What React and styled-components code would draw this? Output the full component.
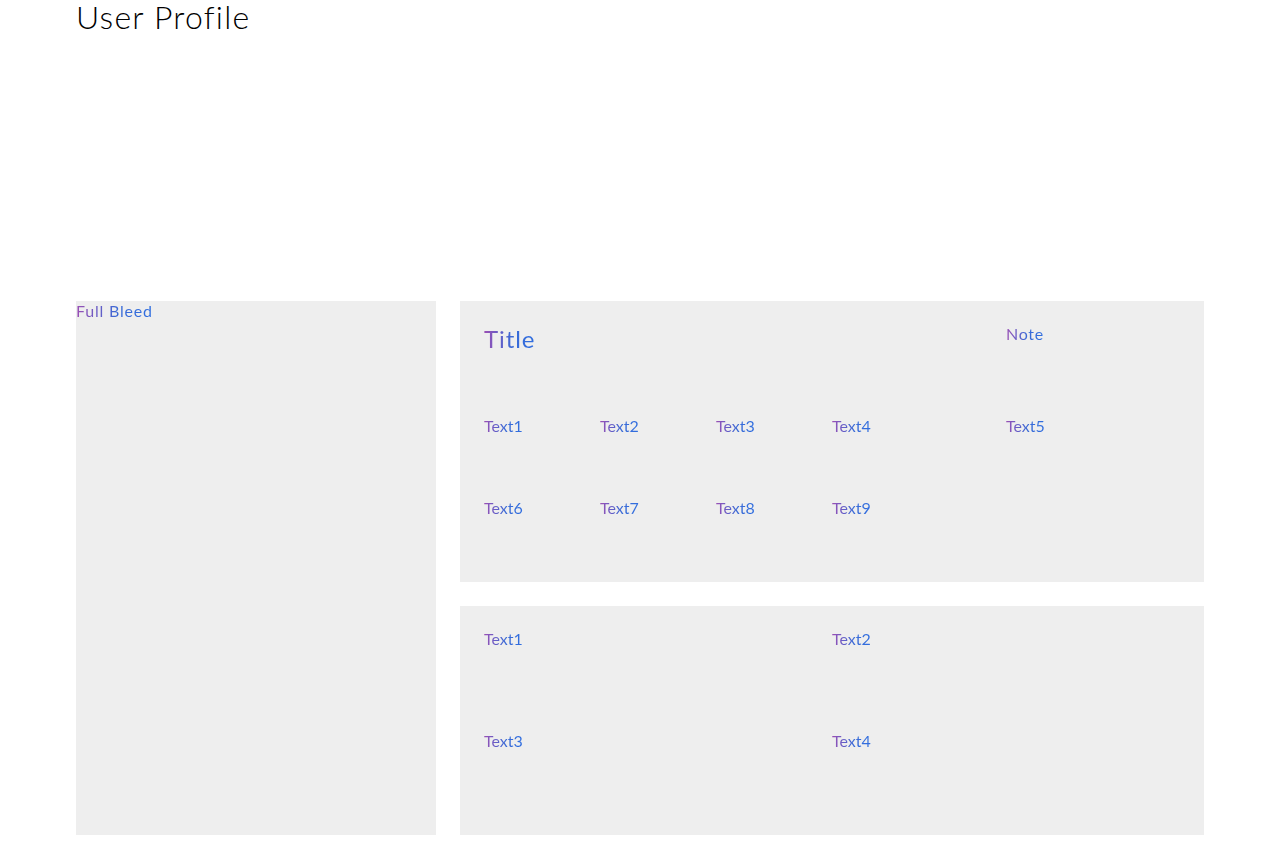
import React from "react";
import styled, { createGlobalStyle } from "styled-components";

const GlobalStyle = createGlobalStyle`
  html, body {
    margin: 0;
    padding: 0;
    background: #ffffff;
    font-family: "Lato", "Noto Sans", sans-serif;
  }
`;

const Page = styled.div`
  width: 1128px;
  margin: 0 auto;
`;

const Heading = styled.h1`
  margin: 0;
  height: 301px;
  font-size: 32px;
  font-weight: 300;
  line-height: 34px;
  letter-spacing: 1.2px;
  color: #000;
`;

const Layout = styled.div`
  display: grid;
  grid-template-columns: 360px 744px;
  column-gap: 24px;
`;

const Panel = styled.div`
  background: #eeeeee;
  box-sizing: border-box;
  height: ${props => props.h}px;
  padding: ${props => props.pad || "0"};
`;

const Column = styled.div`
  display: flex;
  flex-direction: column;
  gap: 24px;
`;

const Grad = styled.span`
  display: inline-block;
  font-size: ${props => props.size || 16}px;
  line-height: ${props => props.lh || 20}px;
  letter-spacing: ${props => props.ls || 0}px;
  font-weight: 400;
  background: linear-gradient(90deg, #9b4fb4 0%, #3a6ad6 55%, #2f6ee0 100%);
  -webkit-background-clip: text;
  background-clip: text;
  color: transparent;
`;

const TopGrid = styled.div`
  display: grid;
  grid-template-columns: 116px 116px 116px 174px 1fr;
  grid-template-rows: 91px 82px auto;
  align-items: start;
`;

const Cell = styled.div`
  grid-column: ${props => props.col};
`;

const TitleCell = styled(Cell)`
  margin-top: -1px;
`;

const NoteCell = styled(Cell)`
  margin-top: -1px;
`;

const BottomGrid = styled.div`
  display: grid;
  grid-template-columns: 348px 348px;
  grid-template-rows: 102px 102px;
`;

const topRow1 = ["Text1", "Text2", "Text3", "Text4", "Text5"];
const topRow2 = ["Text6", "Text7", "Text8", "Text9"];

const App = () => (
  <>
    <GlobalStyle />
    <Page>
      <Heading>User Profile</Heading>
      <Layout>
        <Panel h={534}>
          <Grad lh={16} ls={0.8}>Full Bleed</Grad>
        </Panel>
        <Column>
          <Panel h={281} pad="24px 24px">
            <TopGrid>
              <TitleCell col="1 / 5"><Grad size={24} lh={30} ls={0.9}>Title</Grad></TitleCell>
              <NoteCell col="5"><Grad ls={0.7}>Note</Grad></NoteCell>
              {topRow1.map((t, i) => (
                <Cell key={t} col={i + 1}><Grad>{t}</Grad></Cell>
              ))}
              {topRow2.map((t, i) => (
                <Cell key={t} col={i + 1}><Grad>{t}</Grad></Cell>
              ))}
            </TopGrid>
          </Panel>
          <Panel h={229} pad="23px 24px">
            <BottomGrid>
              <div><Grad>Text1</Grad></div>
              <div><Grad>Text2</Grad></div>
              <div><Grad>Text3</Grad></div>
              <div><Grad>Text4</Grad></div>
            </BottomGrid>
          </Panel>
        </Column>
      </Layout>
    </Page>
  </>
);

export default App;
